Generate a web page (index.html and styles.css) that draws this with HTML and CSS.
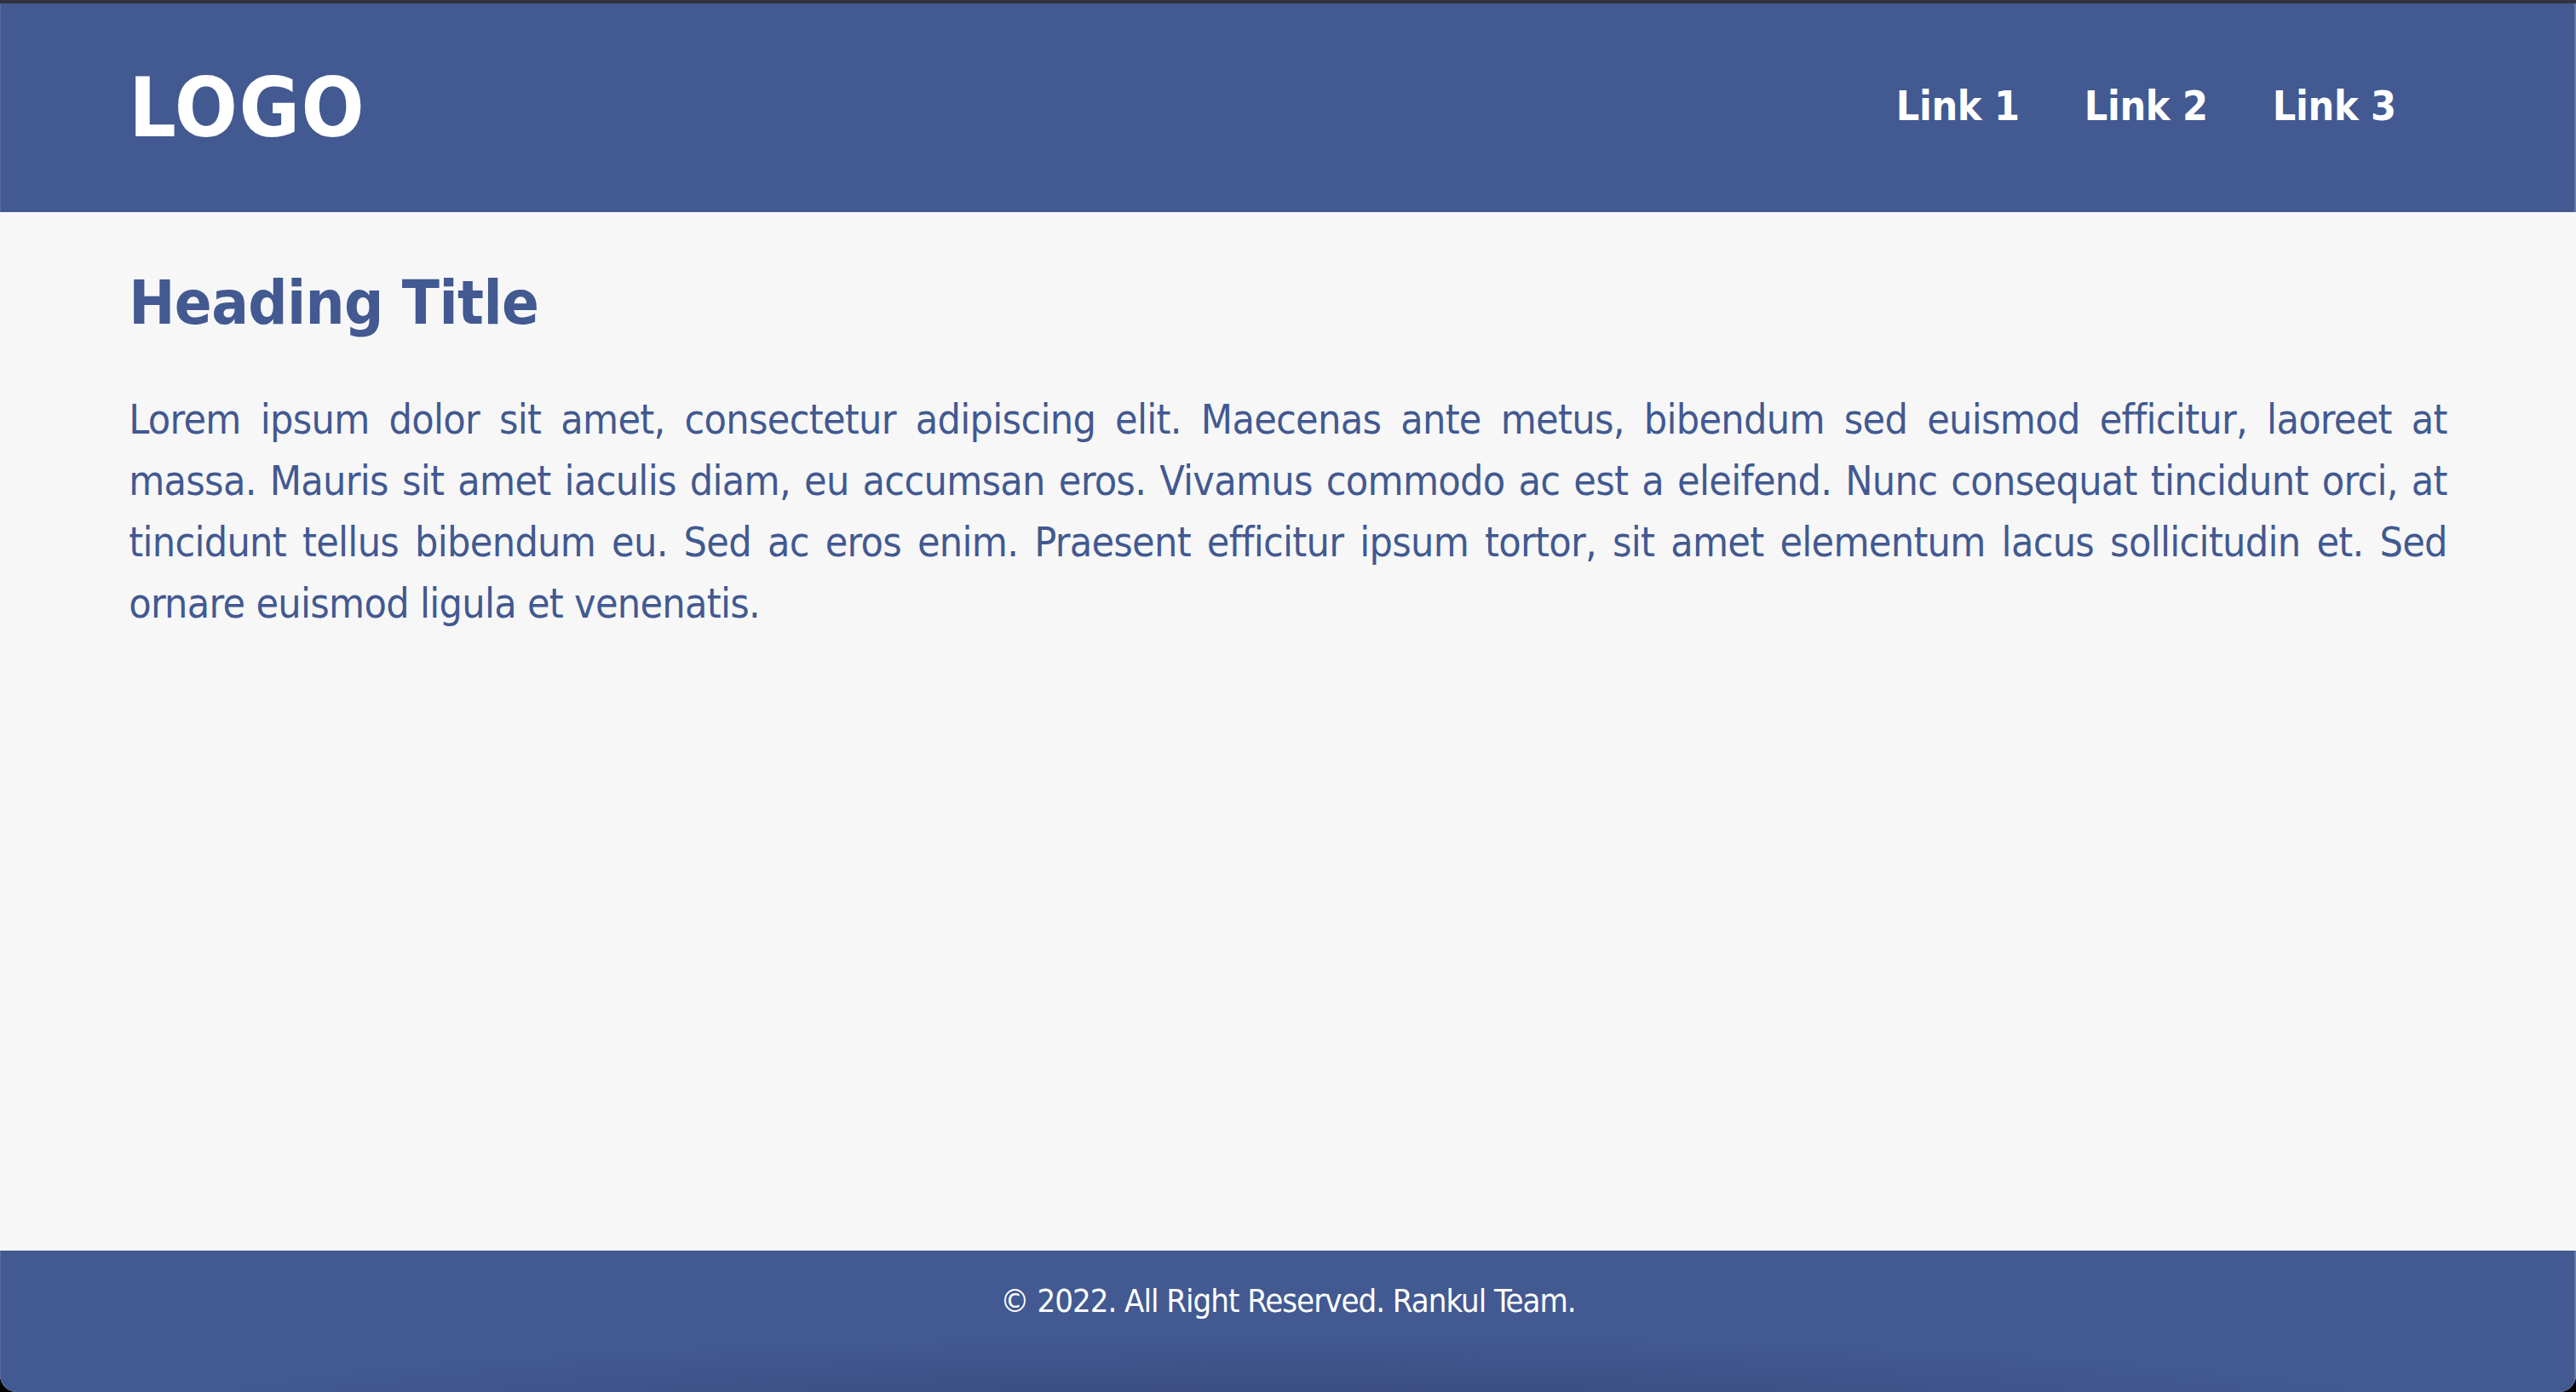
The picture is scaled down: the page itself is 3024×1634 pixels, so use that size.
FILE: index.html
```html
<!DOCTYPE html>
<html lang="en">
<head>
<meta charset="utf-8">
<title>Rankul</title>
<link rel="stylesheet" href="styles.css">
</head>
<body>
<div class="window">
  <header class="site-header">
    <div class="logo">LOGO</div>
    <nav class="nav">
      <a class="nav-link" href="#">Link 1</a>
      <a class="nav-link" href="#">Link 2</a>
      <a class="nav-link" href="#">Link 3</a>
    </nav>
  </header>
  <main class="content">
    <h1 class="title">Heading Title</h1>
    <p class="text">Lorem ipsum dolor sit amet, consectetur adipiscing elit. Maecenas ante metus, bibendum sed euismod efficitur, laoreet at massa. Mauris sit amet iaculis diam, eu accumsan eros. Vivamus commodo ac est a eleifend. Nunc consequat tincidunt orci, at tincidunt tellus bibendum eu. Sed ac eros enim. Praesent efficitur ipsum tortor, sit amet elementum lacus sollicitudin et. Sed ornare euismod ligula et venenatis.</p>
  </main>
  <footer class="site-footer">
    <p class="copy">© 2022. All Right Reserved. Rankul Team.</p>
  </footer>
</div>
</body>
</html>
```
FILE: styles.css
```css
* { box-sizing: border-box; }
html, body {
  margin: 0;
  padding: 0;
  height: 100%;
  background: #000;
}
body {
  font-family: "DejaVu Sans Condensed", "DejaVu Sans", sans-serif;
  color: #425991;
}
.window {
  min-height: 100vh;
  display: flex;
  flex-direction: column;
  background: #f7f7f7;
  border-top: 4px solid #30323f;
  border-radius: 0 0 20px 20px;
  overflow: hidden;
}
.site-header {
  height: 245px;
  background: #425991;
  box-shadow: inset 1px 0 0 #5b6d9b, inset -2px 0 0 #6b7aa0;
  display: flex;
  align-items: center;
  justify-content: space-between;
  padding: 0 5%;
}
.logo {
  color: #fff;
  font-weight: bold;
  font-size: 97px;
  line-height: 1;
  letter-spacing: 1.5px;
}
.nav {
  display: flex;
  gap: 76px;
  margin-right: 60px;
  padding-bottom: 6px;
}
.nav-link {
  color: #fff;
  text-decoration: none;
  font-weight: bold;
  font-size: 48px;
  line-height: 1;
  letter-spacing: -0.3px;
}
.content {
  flex: 1;
  padding: 0 5%;
}
.title {
  margin: 63px 0 0;
  font-size: 72px;
  line-height: 1.2;
  font-weight: bold;
  letter-spacing: -0.6px;
}
.text {
  margin: 58px 0 0;
  font-size: 48px;
  line-height: 72px;
  letter-spacing: -0.7px;
  text-align: justify;
}
.site-footer {
  height: 166px;
  background: radial-gradient(ellipse 45% 60% at 50% 120%, rgba(40, 52, 95, 0.45), rgba(40, 52, 95, 0) 100%), #425991;
  box-shadow: inset 1px 0 0 #5b6d9b, inset -2px 0 0 #6b7aa0;
  color: #fff;
  display: flex;
  justify-content: center;
  padding-top: 34px;
}
.copy {
  margin: 0;
  font-size: 38px;
  line-height: 50px;
  letter-spacing: -1px;
}
```
